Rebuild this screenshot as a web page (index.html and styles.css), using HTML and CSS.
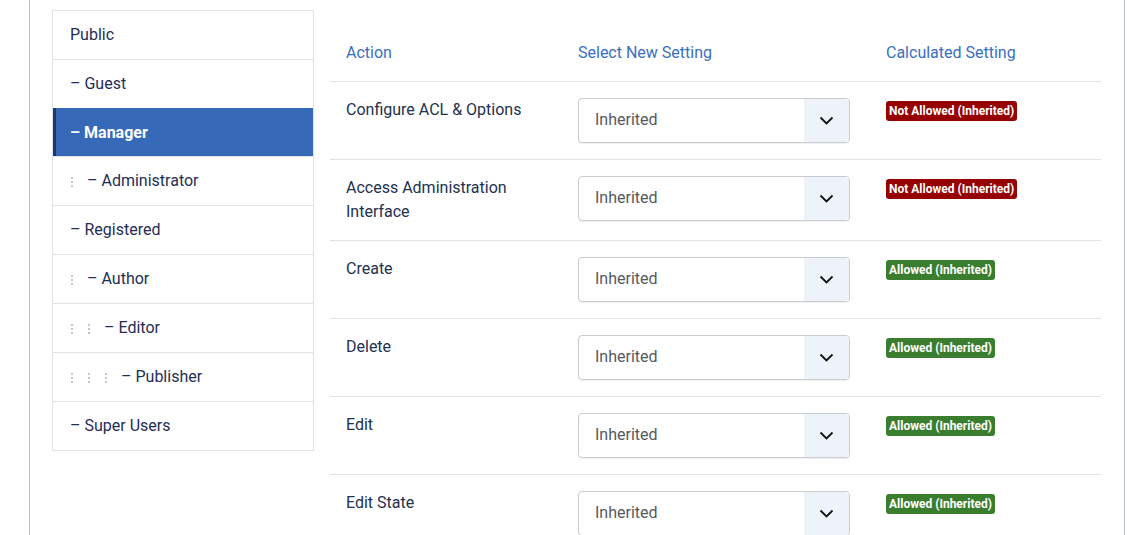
FILE: index.html
```html
<!DOCTYPE html>
<html>
<head>
<meta charset="utf-8">
<link rel="stylesheet" href="styles.css">
</head>
<body>
<div class="frame">
  <div class="layout">
    <ul class="groups">
      <li class="group">Public</li>
      <li class="group">– Guest</li>
      <li class="group active">– Manager</li>
      <li class="group"><span class="lvl"></span>– Administrator</li>
      <li class="group">– Registered</li>
      <li class="group"><span class="lvl"></span>– Author</li>
      <li class="group"><span class="lvl"></span><span class="lvl"></span>– Editor</li>
      <li class="group"><span class="lvl"></span><span class="lvl"></span><span class="lvl"></span>– Publisher</li>
      <li class="group">– Super Users</li>
    </ul>
    <table class="perms">
      <thead>
        <tr>
          <th class="c-action">Action</th>
          <th class="c-select">Select New Setting</th>
          <th class="c-calc">Calculated Setting</th>
        </tr>
      </thead>
      <tbody>
        <tr>
          <td>Configure ACL &amp; Options</td>
          <td><div class="select"><span class="val">Inherited</span><span class="arrow"><svg width="15" height="9" viewBox="0 0 15 9"><path d="M1.5 1.5 7.5 7.5l6-6" fill="none" stroke="#111" stroke-width="1.8"/></svg></span></div></td>
          <td><span class="badge deny">Not Allowed (Inherited)</span></td>
        </tr>
        <tr>
          <td>Access Administration<br>Interface</td>
          <td><div class="select"><span class="val">Inherited</span><span class="arrow"><svg width="15" height="9" viewBox="0 0 15 9"><path d="M1.5 1.5 7.5 7.5l6-6" fill="none" stroke="#111" stroke-width="1.8"/></svg></span></div></td>
          <td><span class="badge deny">Not Allowed (Inherited)</span></td>
        </tr>
        <tr>
          <td>Create</td>
          <td><div class="select"><span class="val">Inherited</span><span class="arrow"><svg width="15" height="9" viewBox="0 0 15 9"><path d="M1.5 1.5 7.5 7.5l6-6" fill="none" stroke="#111" stroke-width="1.8"/></svg></span></div></td>
          <td><span class="badge allow">Allowed (Inherited)</span></td>
        </tr>
        <tr>
          <td>Delete</td>
          <td><div class="select"><span class="val">Inherited</span><span class="arrow"><svg width="15" height="9" viewBox="0 0 15 9"><path d="M1.5 1.5 7.5 7.5l6-6" fill="none" stroke="#111" stroke-width="1.8"/></svg></span></div></td>
          <td><span class="badge allow">Allowed (Inherited)</span></td>
        </tr>
        <tr>
          <td>Edit</td>
          <td><div class="select"><span class="val">Inherited</span><span class="arrow"><svg width="15" height="9" viewBox="0 0 15 9"><path d="M1.5 1.5 7.5 7.5l6-6" fill="none" stroke="#111" stroke-width="1.8"/></svg></span></div></td>
          <td><span class="badge allow">Allowed (Inherited)</span></td>
        </tr>
        <tr>
          <td>Edit State</td>
          <td><div class="select"><span class="val">Inherited</span><span class="arrow"><svg width="15" height="9" viewBox="0 0 15 9"><path d="M1.5 1.5 7.5 7.5l6-6" fill="none" stroke="#111" stroke-width="1.8"/></svg></span></div></td>
          <td><span class="badge allow">Allowed (Inherited)</span></td>
        </tr>
      </tbody>
    </table>
  </div>
</div>
</body>
</html>
```

FILE: styles.css
```css
html, body {
  margin: 0;
  padding: 0;
  background: #fff;
  font-family: Roboto, "Liberation Sans", sans-serif;
  font-size: 16px;
  line-height: 24px;
  color: #22314f;
  overflow: hidden;
}

.frame {
  margin-left: 29px;
  width: 1094px;
  height: 535px;
  border-left: 1px solid #b9c2cf;
  border-right: 1px solid #b9c2cf;
}

.layout {
  display: flex;
  align-items: flex-start;
  gap: 16px;
  padding: 10px 23px 0 22px;
}

.groups {
  list-style: none;
  margin: 0;
  padding: 0;
  width: 260px;
  border: 1px solid #dfe3e7;
  flex: none;
}

.group {
  height: 24px;
  padding: 12px 16px 12px 17px;
  border-top: 1px solid #dfe3e7;
  color: #1f2e55;
  white-space: nowrap;
}

.group:first-child {
  border-top: 0;
}

.group.active {
  background: #3669b8;
  color: #fff;
  font-weight: 700;
  border-top: 0;
  border-left: 3px solid #1c3866;
  padding: 13px 16px 11px 14px;
}

.lvl {
  display: inline-block;
  width: 15px;
  height: 10px;
  border-left: 2px dotted #c3c7cc;
  margin-left: 1px;
  margin-right: -1px;
  vertical-align: -1px;
}

.perms {
  flex: 1;
  border-collapse: collapse;
}

.perms th {
  text-align: left;
  font-weight: 400;
  color: #3a6fc1;
  padding: 31px 16px 16px;
  border-bottom: 1px solid #dfe3e7;
}

.perms td {
  vertical-align: top;
  padding: 16px 16px;
  border-bottom: 1px solid #dfe3e7;
  color: #22314f;
}

.c-action { width: 200px; }
.c-select { width: 276px; }

.select {
  display: flex;
  width: 270px;
  height: 43px;
  border: 1px solid #c8cbcf;
  border-radius: 4px;
  box-shadow: 0 1px 1px rgba(0,0,0,0.06);
  overflow: hidden;
}

.val {
  flex: 1;
  padding-left: 16px;
  line-height: 42px;
  color: #55595f;
}

.arrow {
  width: 45px;
  background: #eef2f9;
  display: flex;
  align-items: center;
  justify-content: center;
}

.badge {
  display: inline-block;
  margin-top: 3px;
  padding: 1px 3px;
  border-radius: 3px;
  font-size: 12px;
  line-height: 18px;
  font-weight: 700;
  color: #fff;
  vertical-align: top;
}

.deny { background: #960000; }
.allow { background: #3a7d2f; }
```
